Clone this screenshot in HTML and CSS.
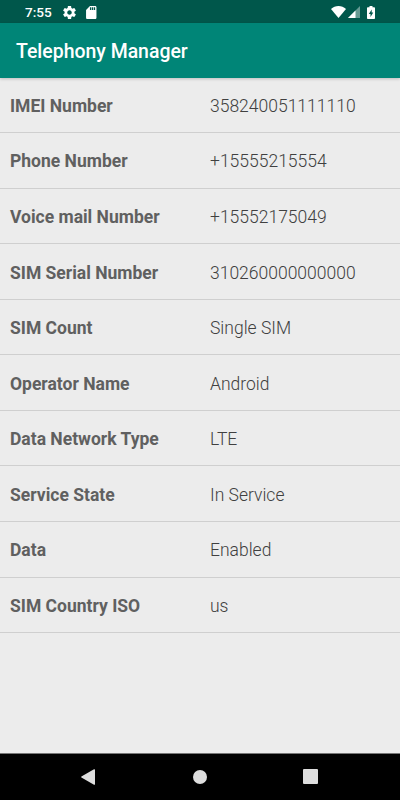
FILE: index.html
```html
<!DOCTYPE html>
<html lang="en">
<head>
    <meta charset="UTF-8">
    <meta name="viewport" content="width=device-width, initial-scale=1.0">
    <title>Telephony Manager</title>
    <link rel="stylesheet" href="styles.css">
</head>
<body>
    <div class="status-bar">
        <span class="time">7:55</span>
        <svg class="icon-settings" viewBox="2 2 20 20" width="13" height="13">
            <path fill="#fff" d="M19.43 12.98c.04-.32.07-.64.07-.98s-.03-.66-.07-.98l2.11-1.65c.19-.15.24-.42.12-.64l-2-3.46c-.12-.22-.39-.3-.61-.22l-2.49 1c-.52-.4-1.08-.73-1.69-.98l-.38-2.65C14.46 2.18 14.25 2 14 2h-4c-.25 0-.46.18-.49.42l-.38 2.65c-.61.25-1.17.59-1.69.98l-2.49-1c-.23-.09-.49 0-.61.22l-2 3.46c-.13.22-.07.49.12.64l2.11 1.65c-.04.32-.07.65-.07.98s.03.66.07.98l-2.11 1.65c-.19.15-.24.42-.12.64l2 3.46c.12.22.39.3.61.22l2.49-1c.52.4 1.08.73 1.69.98l.38 2.65c.03.24.24.42.49.42h4c.25 0 .46-.18.49-.42l.38-2.65c.61-.25 1.17-.59 1.69-.98l2.49 1c.23.09.49 0 .61-.22l2-3.46c.12-.22.07-.49-.12-.64l-2.11-1.65zM12 15.5c-1.93 0-3.5-1.57-3.5-3.5s1.57-3.5 3.5-3.5 3.5 1.57 3.5 3.5-1.57 3.5-3.5 3.5z"/>
        </svg>
        <svg class="icon-sd" viewBox="4 2 16 20" width="10.5" height="13">
            <path fill="#fff" d="M18 2h-8L4.02 8 4 20c0 1.1.9 2 2 2h12c1.1 0 2-.9 2-2V4c0-1.1-.9-2-2-2zm-6 6h-2V4h2v4zm3 0h-2V4h2v4zm3 0h-2V4h2v4z"/>
        </svg>
        <div class="status-right">
            <svg class="icon-wifi" viewBox="0 0 15 12" width="15" height="12">
                <path fill="#fff" d="M7.5 12L0 2.9C2.1 1 4.7 0 7.5 0s5.4 1 7.5 2.9z"/>
            </svg>
            <svg class="icon-signal" viewBox="0 0 12 12" width="12" height="12">
                <path fill="#fff" fill-opacity=".4" d="M0 12L12 0v12z"/>
                <path fill="#fff" d="M0 12L7.5 4.5V12z"/>
            </svg>
            <svg class="icon-battery" viewBox="0 0 8 13" width="8" height="13">
                <path fill="#fff" fill-rule="evenodd" d="M2.500 0h3v1.300H7.200c.4 0 .8.3.8.8v10.100c0 .5-.4.8-.8.8H.8c-.4 0-.8-.3-.8-.8V2.100c0-.5.4-.8.8-.8h1.700zM4.700 3.500L1.800 7.900h1.700v3.200l2.800-4.500H4.700z"/>
            </svg>
        </div>
    </div>

    <div class="app-bar">
        <h1>Telephony Manager</h1>
    </div>

    <div class="list">
        <div class="row">
            <div class="label">IMEI Number</div>
            <div class="value">358240051111110</div>
        </div>
        <div class="row">
            <div class="label">Phone Number</div>
            <div class="value">+15555215554</div>
        </div>
        <div class="row">
            <div class="label">Voice mail Number</div>
            <div class="value">+15552175049</div>
        </div>
        <div class="row">
            <div class="label">SIM Serial Number</div>
            <div class="value">310260000000000</div>
        </div>
        <div class="row">
            <div class="label">SIM Count</div>
            <div class="value">Single SIM</div>
        </div>
        <div class="row">
            <div class="label">Operator Name</div>
            <div class="value">Android</div>
        </div>
        <div class="row">
            <div class="label">Data Network Type</div>
            <div class="value">LTE</div>
        </div>
        <div class="row">
            <div class="label">Service State</div>
            <div class="value">In Service</div>
        </div>
        <div class="row">
            <div class="label">Data</div>
            <div class="value">Enabled</div>
        </div>
        <div class="row">
            <div class="label">SIM Country ISO</div>
            <div class="value">us</div>
        </div>
    </div>

    <div class="nav-bar">
        <svg viewBox="0 0 14 16" width="14" height="16">
            <path fill="#dedede" d="M13 .3c.5-.3 1 0 1 .5v14.4c0 .5-.5.8-1 .5L.4 8.500c-.4-.3-.4-.7 0-1z"/>
        </svg>
        <svg class="nav-home" viewBox="0 0 14 14" width="14" height="14">
            <circle fill="#dedede" cx="7" cy="7" r="7"/>
        </svg>
        <svg viewBox="0 0 15 15" width="15" height="15">
            <rect fill="#dedede" width="15" height="15" rx="1"/>
        </svg>
    </div>
</body>
</html>
```
FILE: styles.css
```css
* {
    box-sizing: border-box;
}

body {
    font-family: Roboto, sans-serif;
    margin: 0;
    height: 800px;
    display: flex;
    flex-direction: column;
    background-color: #ececec;
    overflow: hidden;
}

.status-bar {
    display: flex;
    align-items: center;
    height: 23px;
    padding: 1px 25px 0 25px;
    background-color: #00574b;
    color: #fff;
}

.time {
    width: 38px;
    font-size: 13.6px;
    font-weight: 500;
}

.icon-sd {
    margin-left: 10px;
}

.status-right {
    display: flex;
    align-items: center;
    margin-left: auto;
}

.icon-signal {
    margin-left: 2px;
}

.icon-battery {
    margin-left: 7px;
}

.app-bar {
    display: flex;
    align-items: center;
    height: 54.6px;
    padding: 2px 16px 0;
    background-color: #008577;
    box-shadow: 0 1px 3px rgba(0, 0, 0, 0.2);
    z-index: 1;
}

.app-bar h1 {
    margin: 0;
    font-size: 19.45px;
    font-weight: 500;
    color: #fff;
}

.list {
    flex: 1;
}

.row {
    display: flex;
    align-items: center;
    height: 55.55px;
    padding: 2px 10px 0;
    border-bottom: 1px solid #cfcfcf;
    font-size: 17.5px;
}

.label {
    width: 200px;
    font-weight: 700;
    color: #606060;
}

.value {
    font-weight: 300;
    color: #404040;
}

.nav-bar {
    display: flex;
    align-items: center;
    height: 47px;
    padding: 0 82px 1px 81px;
    border-top: 1px solid #777;
    background-color: #000;
}

.nav-home {
    margin: 0 auto 0 98px;
}
```
